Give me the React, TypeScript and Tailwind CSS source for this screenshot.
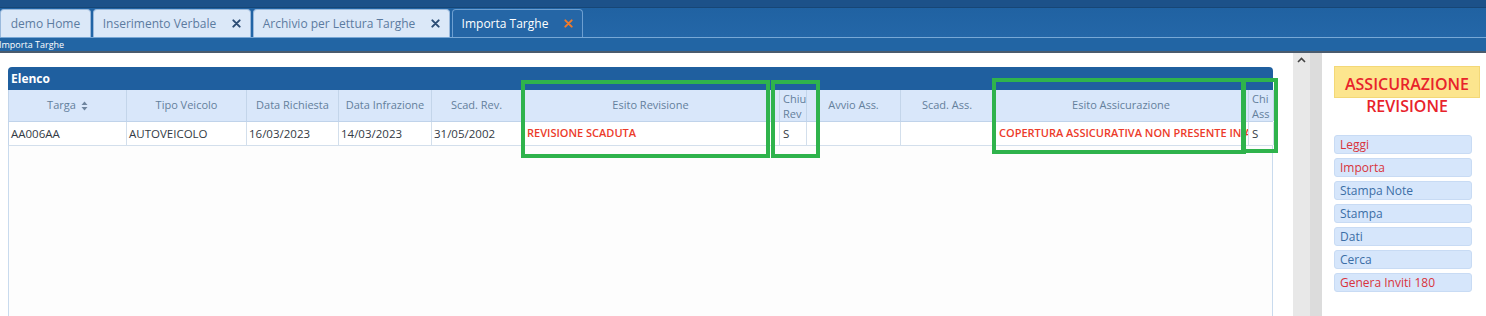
import React from 'react';

const FONT = { fontFamily: '"Open Sans", "Noto Sans", Arial, sans-serif' };

type Col = { key: string; label: React.ReactNode; w: string };

const COLS: Col[] = [
  { key: 'targa', label: 'Targa', w: 'w-[118px]' },
  { key: 'tipo', label: 'Tipo Veicolo', w: 'w-[120px]' },
  { key: 'rich', label: 'Data Richiesta', w: 'w-[92px]' },
  { key: 'infr', label: 'Data Infrazione', w: 'w-[93px]' },
  { key: 'scadrev', label: 'Scad. Rev.', w: 'w-[90px]' },
  { key: 'esitorev', label: 'Esito Revisione', w: 'w-[258px]' },
  { key: 'chirev', label: 'Chi Rev', w: 'w-[27px]' },
  { key: 'avvio', label: 'Avvio Ass.', w: 'w-[94px]' },
  { key: 'scadass', label: 'Scad. Ass.', w: 'w-[93px]' },
  { key: 'esitoass', label: 'Esito Assicurazione', w: 'w-[255px]' },
  { key: 'chiass', label: 'Chi Ass', w: 'w-[25px]' },
];

const ROW: Record<string, string> = {
  targa: 'AA006AA',
  tipo: 'AUTOVEICOLO',
  rich: '16/03/2023',
  infr: '14/03/2023',
  scadrev: '31/05/2002',
  esitorev: 'REVISIONE SCADUTA',
  chirev: 'S',
  avvio: '',
  scadass: '',
  esitoass: 'COPERTURA ASSICURATIVA NON PRESENTE IN ARCHIVIO',
  chiass: 'S',
};

const BUTTONS = [
  { label: 'Leggi', red: true },
  { label: 'Importa', red: true },
  { label: 'Stampa Note', red: false },
  { label: 'Stampa', red: false },
  { label: 'Dati', red: false },
  { label: 'Cerca', red: false },
  { label: 'Genera Inviti 180', red: true },
];

function CloseX({ color }: { color: string }) {
  return (
    <svg width="9" height="9" viewBox="0 0 10 10" className="ml-[16px]">
      <path d="M1.5 1.5 L8.5 8.5 M8.5 1.5 L1.5 8.5" stroke={color} strokeWidth="2.2" strokeLinecap="round" />
    </svg>
  );
}

function Tab({ label, closable, active, w }: { label: string; closable?: boolean; active?: boolean; w: string }) {
  return (
    <div
      className={
        'h-[28px] flex items-center justify-center rounded-t-[4px] border border-b-0 text-[12px] ' +
        w +
        (active
          ? ' bg-[#2566a6] border-[#6d9fd1] text-white'
          : ' bg-[#dbe8f8] border-[#9ab9dc] text-[#5b7ba0]')
      }
    >
      <span>{label}</span>
      {closable && <CloseX color={active ? '#f07a2a' : '#2b4c74'} />}
    </div>
  );
}

function SortIcon() {
  return (
    <svg width="7" height="10" viewBox="0 0 7 10" className="ml-[5px] inline-block">
      <path d="M3.5 0.5 L6.5 4 L0.5 4 Z" fill="#6f859e" />
      <path d="M3.5 9.5 L6.5 6 L0.5 6 Z" fill="#6f859e" />
    </svg>
  );
}

function HeaderCell({ col }: { col: Col }) {
  const narrow = col.key === 'chirev' || col.key === 'chiass';
  return (
    <div
      className={
        'h-[31px] shrink-0 border-r border-[#c3d5ea] flex items-center overflow-hidden text-[11px] text-[#64809c] ' +
        col.w +
        (narrow ? ' justify-start pl-[3px] leading-[15px]' : ' justify-center')
      }
    >
      {narrow ? (
        <div className="flex flex-col whitespace-nowrap">
          <span>{col.key === 'chirev' ? 'Chiu' : 'Chi'}</span>
          <span>{col.key === 'chirev' ? 'Rev' : 'Ass'}</span>
        </div>
      ) : (
        <span className="whitespace-nowrap flex items-center">
          {col.label}
          {col.key === 'targa' && <SortIcon />}
        </span>
      )}
    </div>
  );
}

function DataCell({ col }: { col: Col }) {
  const isRed = col.key === 'esitorev' || col.key === 'esitoass';
  const narrow = col.key === 'chirev' || col.key === 'chiass';
  return (
    <div
      className={
        'h-[23px] shrink-0 border-r border-[#d3dfec] flex items-center overflow-hidden whitespace-nowrap ' +
        col.w +
        (isRed
          ? ' text-[#ec3b2a] font-semibold text-[11px] pl-[5px]'
          : narrow
            ? ' text-[#333a44] text-[11.5px] pl-[3px]'
            : ' text-[#333a44] text-[11.5px] pl-[2px]')
      }
    >
      {ROW[col.key]}
    </div>
  );
}

function GreenBox({ cls }: { cls: string }) {
  return <div className={'absolute border-[4px] border-[#2fb34c] pointer-events-none ' + cls} />;
}

export default function App() {
  return (
    <div className="w-[1486px] h-[316px] overflow-hidden bg-white relative flex flex-col" style={FONT}>
      {/* top bar */}
      <div className="h-[8px] bg-[#1c5189] border-b border-[#174676]" />
      <div className="h-[30px] bg-gradient-to-b from-[#2062a2] to-[#2467a8] border-b border-[#78a8d6] flex items-end gap-[2px]">
        <Tab label="demo Home" w="w-[91px]" />
        <Tab label="Inserimento Verbale" w="w-[158px]" closable />
        <Tab label="Archivio per Lettura Targhe" w="w-[197px]" closable />
        <Tab label="Importa Targhe" w="w-[131px]" closable active />
      </div>
      <div className="h-[13px] bg-[#2265a4] text-white text-[9px] leading-[13px] -indent-[1px]">
        Importa Targhe
      </div>
      <div className="h-[2px] bg-[#4a5b6d]" />

      {/* body */}
      <div className="flex-1 flex">
        <div className="w-[1293px] shrink-0 pt-[14px] pl-[8px]">
          <div className="w-[1265px] h-full flex flex-col">
            <div className="h-[23px] rounded-t-[4px] bg-[#1f5f9f] text-white text-[12px] font-bold flex items-center pl-[3px]">
              Elenco
            </div>
            <div className="flex bg-[#d9e7fa] border-b border-[#c0d3ea] border-l border-l-[#c3d5ea]">
              {COLS.map(c => (
                <HeaderCell key={c.key} col={c} />
              ))}
            </div>
            <div className="flex bg-white border-b border-[#d3dfec] border-l border-l-[#c3d5ea]">
              {COLS.map(c => (
                <DataCell key={c.key} col={c} />
              ))}
            </div>
            <div className="flex-1 bg-[#fdfdfd] border-l border-r border-[#c9dbee]" />
          </div>
        </div>

        {/* scrollbar */}
        <div className="w-[29px] shrink-0 flex">
          <div className="w-[17px] bg-[#e8e8e8] flex justify-center pt-[4px]">
            <svg width="9" height="6" viewBox="0 0 9 6">
              <path d="M1 5 L4.5 1.5 L8 5" stroke="#444" strokeWidth="1.6" fill="none" />
            </svg>
          </div>
          <div className="w-[12px] bg-[#dcdcdc]" />
        </div>

        {/* right panel */}
        <div className="flex-1 pl-[12px] pt-[13px]">
          <div className="w-[146px] h-[32px] bg-[#fce58e] border border-[#f3d877] text-center text-[#e8232b] font-semibold text-[16px] leading-[22px] pt-[6px]">
            ASSICURAZIONE REVISIONE
          </div>
          <div className="mt-[37px] flex flex-col gap-[4px]">
            {BUTTONS.map(b => (
              <div
                key={b.label}
                className={
                  'w-[138px] h-[19px] rounded-[3px] bg-[#d6e6fb] border border-[#c8dbf4] text-[12px] leading-[17px] pl-[5px] ' +
                  (b.red ? 'text-[#d9343c]' : 'text-[#3b6ea6]')
                }
              >
                {b.label}
              </div>
            ))}
          </div>
        </div>
      </div>

      {/* annotation boxes */}
      <GreenBox cls="left-[521px] top-[80px] w-[249px] h-[78px]" />
      <GreenBox cls="left-[771px] top-[80px] w-[49px] h-[78px]" />
      <GreenBox cls="left-[992px] top-[78px] w-[254px] h-[76px]" />
      <GreenBox cls="left-[1241px] top-[78px] w-[37px] h-[75px]" />
    </div>
  );
}
